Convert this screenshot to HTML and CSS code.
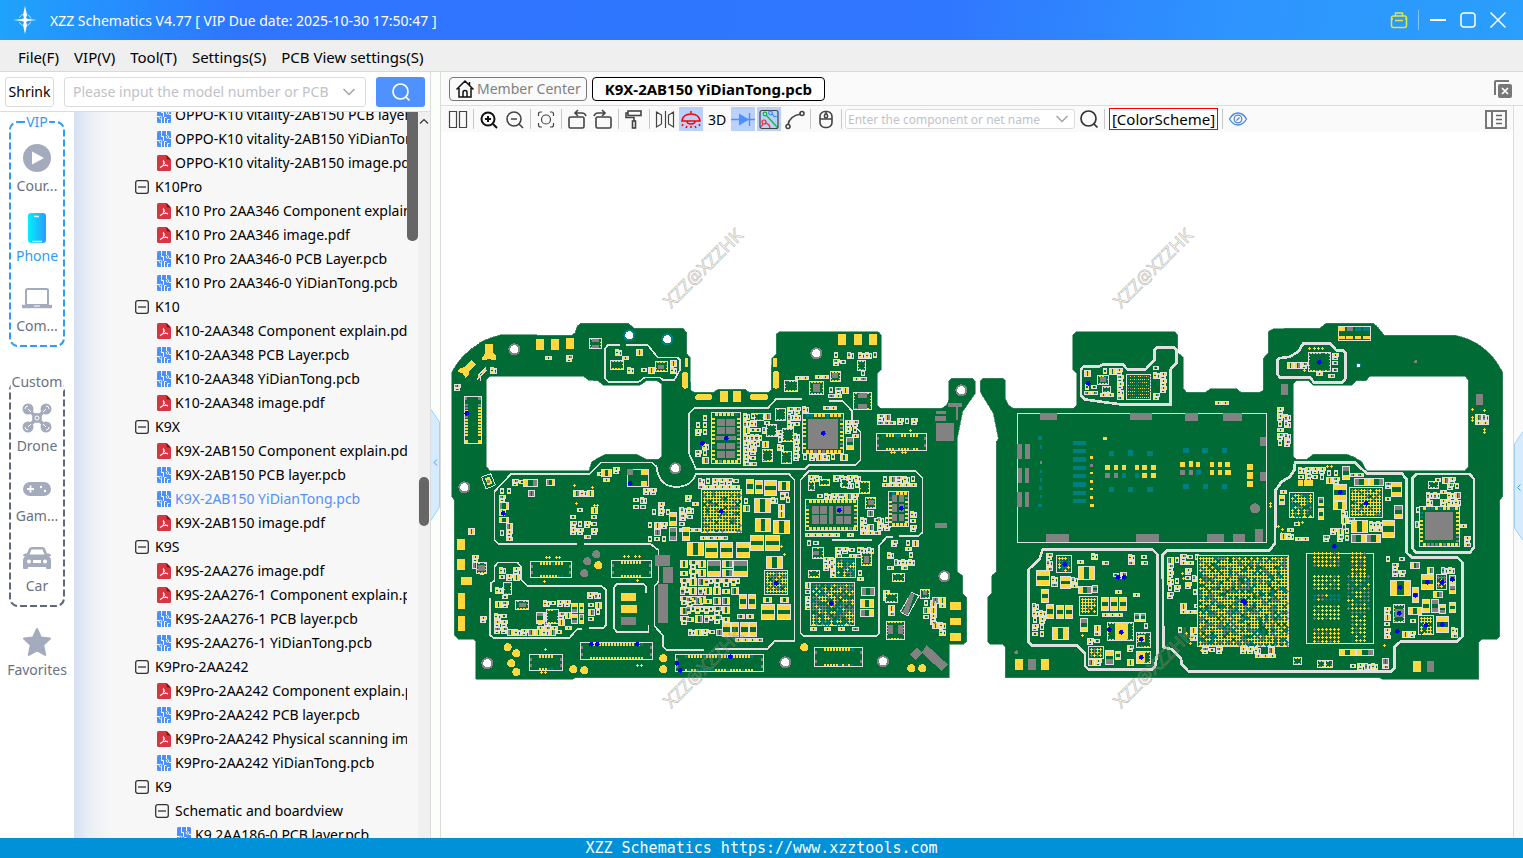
FILE: index.html
```html
<!DOCTYPE html>
<html lang="en">
  <head>
    <meta charset="UTF-8" />
    <title>XZZ Schematics V4.77</title>
    <link rel="stylesheet" href="styles.css">
  </head>
  <body>
    <svg class="sprite" width="0" height="0" aria-hidden="true">
      <symbol id="i-pdf" viewBox="0 0 14 16">
        <path d="M1.500 0H9.500L14 4.500V14.500Q14 16 12.500 16H1.500Q0 16 0 14.500V1.500Q0 0 1.500 0Z" fill="#d6363f" />
        <path d="M9.500 0L14 4.500H10.500Q9.500 4.500 9.500 3.500Z" fill="#8f1118" />
        <path d="M6.300 5.500Q7.500 5.400 7 8Q6.200 10.800 4 12.600Q3 13 3.300 12Q4.500 10.500 10.500 10.200Q11.500 11.300 10 11Q7.300 9.500 6.400 6.800Z" fill="none" stroke="#fff" stroke-width="1" />
      </symbol>
      <symbol id="i-pcb" viewBox="0 0 14 16">
        <rect width="14" height="16" rx="1.500" fill="#4c90fb" />
        <path d="M4.500 0V5.500H6.500V10M9.500 0V4M0 9.500H2.500M14 7.500H12M4.500 16V12M7.500 16V10.500H9.500M10.500 16V12.500H12.500" fill="none" stroke="#fff" />
        <circle cx="10.500" cy="6" r="1.300" fill="#4c90fb" stroke="#fff" stroke-width=".8" />
        <circle cx="3.500" cy="10.500" r="1.300" fill="#4c90fb" stroke="#fff" stroke-width=".8" />
      </symbol>
      <symbol id="i-minus" viewBox="0 0 14 14">
        <rect x=".7" y=".7" width="12.600" height="12.600" rx="2" fill="none" stroke="#333" stroke-width="1.300" />
        <path d="M3 7H11" stroke="#333" stroke-width="1.300" />
      </symbol>
      <symbol id="i-search" viewBox="0 0 20 20">
        <circle cx="9.500" cy="9.500" r="7.500" fill="none" stroke="currentColor" stroke-width="1.700" />
        <path d="M14.800 14.800L18.500 18.500" stroke="currentColor" stroke-width="1.700" />
      </symbol>
      <symbol id="i-down" viewBox="0 0 14 10">
        <path d="M1.500 2L7 7.500L12.500 2" fill="none" stroke="#a0a4aa" stroke-width="1.500" />
      </symbol>
    </svg>

    <header class="titlebar">
      <svg class="logo" viewBox="0 0 24 28">
        <circle cx="12" cy="14" r="6" fill="none" stroke="#bfe0ff" stroke-width="1" stroke-dasharray="5 4.400" stroke-dashoffset="-2" />
        <path d="M12 0L14 9L13 12L15 13L24 14L15 15L13 16L14 19L12 28L10 19L11 16L9 15L0 14L9 13L11 12L10 9Z" fill="#fff" />
      </svg>
      <h1>XZZ Schematics V4.77 [ VIP Due date: 2025-10-30 17:50:47 ]</h1>
      <div class="window-buttons">
        <button aria-label="License"><svg width="18" height="18" viewBox="0 0 18 18" fill="none" stroke="#e3e53c" stroke-width="1.500"><path d="M5.500 5V2H12.500V5" /><rect x="1.500" y="5" width="15" height="11.500" rx="2" /><path d="M1.500 8H3M15 8H16.500M5 9.500H13" /></svg></button>
        <span class="bar"></span>
        <button aria-label="Minimize"><svg width="18" height="18" viewBox="0 0 18 18"><path d="M1 9H17" stroke="#fff" stroke-width="2" /></svg></button>
        <button aria-label="Maximize"><svg width="18" height="18" viewBox="0 0 18 18"><rect x="2" y="2" width="14" height="14" rx="3" fill="none" stroke="#fff" stroke-width="1.500" /></svg></button>
        <button aria-label="Close"><svg width="18" height="18" viewBox="0 0 18 18"><path d="M1.500 1.500L16.500 16.500M16.500 1.500L1.500 16.500" stroke="#fff" stroke-width="1.500" /></svg></button>
      </div>
    </header>

    <nav class="menubar">
      <button>File(F)</button>
      <button>VIP(V)</button>
      <button>Tool(T)</button>
      <button>Settings(S)</button>
      <button>PCB View settings(S)</button>
    </nav>

    <div class="workspace">
      <aside class="sidebar">
        <div class="search-row">
          <button class="shrink">Shrink</button>
          <div class="combo">
            <input type="text" aria-label="Model search" placeholder="Please input the model number or PCB" />
            <button aria-label="History"><svg width="14" height="10"><use href="#i-down" /></svg></button>
          </div>
          <button class="search-btn" aria-label="Search"><svg width="20" height="20"><use href="#i-search" /></svg></button>
        </div>

        <div class="browser">
          <nav class="rail">
            <section class="rail-group vip">
              <svg class="frame"><rect x="1" y="1" rx="8" /></svg>
              <h2>VIP</h2>
              <a href="#">
                <svg viewBox="0 0 30 30"><circle cx="15" cy="15" r="14" fill="#a3abbd" /><path d="M10 8.500V21.500L22 15Z" fill="#fff" /></svg>
                Cour...
              </a>
              <a href="#" class="active">
                <svg viewBox="0 0 30 30"><defs><linearGradient id="ph"><stop stop-color="#00f0ff" /><stop offset="1" stop-color="#2b9bff" /></linearGradient></defs><rect x="6" y="0" width="18" height="30" rx="3" fill="url(#ph)" /><path d="M12 3.500H17M10 28.500H20" stroke="#d5f5ff" stroke-width="1.300" /></svg>
                Phone
              </a>
              <a href="#">
                <svg viewBox="0 0 30 30" fill="none" stroke="#a3abbd"><rect x="4" y="6" width="22" height="16" rx="1.500" stroke-width="2" /><path d="M0 23.500H30" stroke-width="3.400" /><path d="M12 23H18" stroke="#fff" stroke-width="1" /></svg>
                Com...
              </a>
            </section>

            <section class="rail-group custom">
              <svg class="frame"><rect x="1" y="1" rx="8" /></svg>
              <h2>Custom</h2>
              <a href="#">
                <svg viewBox="0 0 30 30" fill="#a3abbd"><circle cx="6" cy="6" r="5.500" /><circle cx="24" cy="6" r="5.500" /><circle cx="6" cy="24" r="5.500" /><circle cx="24" cy="24" r="5.500" /><path d="M6 6L24 24M24 6L6 24" stroke="#a3abbd" stroke-width="3.500" /><circle cx="15" cy="15" r="5" /><g fill="none" stroke="#fff"><path d="M3 6A3 3 0 0 1 6 3M27 6A3 3 0 0 0 24 3M3 24A3 3 0 0 0 6 27M27 24A3 3 0 0 1 24 27" /><circle cx="15" cy="15" r="2" /><path d="M6 6L9 9M24 6L21 9M6 24L9 21M24 24L21 21" /></g></svg>
                Drone
              </a>
              <a href="#">
                <svg viewBox="0 0 30 30"><rect x="1" y="9" width="28" height="14" rx="7" fill="#a3abbd" /><path d="M8.500 12.500V19.500M5 16H12" stroke="#fff" stroke-width="1.800" /><circle cx="19" cy="14" r="1.200" fill="#fff" /><circle cx="23" cy="18" r="1.200" fill="#fff" /></svg>
                Gam...
              </a>
              <a href="#">
                <svg viewBox="0 0 30 30"><path d="M1 12L3 10.500H5L7 5.500Q8 4 10 4H20Q22 4 23 5.500L25 10.500H27L29 12V13H27Q29 15 29 17V25Q29 26 28 26H25Q24 26 24 25V24H6V25Q6 26 5 26H2Q1 26 1 25V17Q1 15 3 13H1Z" fill="#a3abbd" /><path d="M7.500 11.500L9.500 6.500H20.500L22.500 11.500Z" fill="#fff" /><circle cx="7" cy="18.500" r="2" fill="#fff" /><circle cx="23" cy="18.500" r="2" fill="#fff" /><rect x="11" y="17" width="8" height="3" fill="#fff" /></svg>
                Car
              </a>
            </section>

            <a href="#" class="favorites">
              <svg viewBox="0 0 30 30"><path d="M15 2L18.900 10.500L28 11.500L21.200 18L23.200 28L15 23.300L6.800 28L8.800 18L2 11.500L11.100 10.500Z" fill="#a3abbd" stroke="#a3abbd" stroke-width="2" stroke-linejoin="round" /></svg>
              Favorites
            </a>
          </nav>

          <ul class="tree">
            <li class="file"><svg><use href="#i-pcb" /></svg>OPPO-K10 vitality-2AB150 PCB layer.pcb</li>
            <li class="file"><svg><use href="#i-pcb" /></svg>OPPO-K10 vitality-2AB150 YiDianTong.pcb</li>
            <li class="file"><svg><use href="#i-pdf" /></svg>OPPO-K10 vitality-2AB150 image.pdf</li>
            <li class="folder"><svg><use href="#i-minus" /></svg>K10Pro</li>
            <li class="file"><svg><use href="#i-pdf" /></svg>K10 Pro 2AA346 Component explain.pdf</li>
            <li class="file"><svg><use href="#i-pdf" /></svg>K10 Pro 2AA346 image.pdf</li>
            <li class="file"><svg><use href="#i-pcb" /></svg>K10 Pro 2AA346-0 PCB Layer.pcb</li>
            <li class="file"><svg><use href="#i-pcb" /></svg>K10 Pro 2AA346-0 YiDianTong.pcb</li>
            <li class="folder"><svg><use href="#i-minus" /></svg>K10</li>
            <li class="file"><svg><use href="#i-pdf" /></svg>K10-2AA348 Component explain.pdf</li>
            <li class="file"><svg><use href="#i-pcb" /></svg>K10-2AA348 PCB Layer.pcb</li>
            <li class="file"><svg><use href="#i-pcb" /></svg>K10-2AA348 YiDianTong.pcb</li>
            <li class="file"><svg><use href="#i-pdf" /></svg>K10-2AA348 image.pdf</li>
            <li class="folder"><svg><use href="#i-minus" /></svg>K9X</li>
            <li class="file"><svg><use href="#i-pdf" /></svg>K9X-2AB150 Component explain.pdf</li>
            <li class="file"><svg><use href="#i-pcb" /></svg>K9X-2AB150 PCB layer.pcb</li>
            <li class="file selected"><svg><use href="#i-pcb" /></svg>K9X-2AB150 YiDianTong.pcb</li>
            <li class="file"><svg><use href="#i-pdf" /></svg>K9X-2AB150 image.pdf</li>
            <li class="folder"><svg><use href="#i-minus" /></svg>K9S</li>
            <li class="file"><svg><use href="#i-pdf" /></svg>K9S-2AA276 image.pdf</li>
            <li class="file"><svg><use href="#i-pdf" /></svg>K9S-2AA276-1 Component explain.pdf</li>
            <li class="file"><svg><use href="#i-pcb" /></svg>K9S-2AA276-1 PCB layer.pcb</li>
            <li class="file"><svg><use href="#i-pcb" /></svg>K9S-2AA276-1 YiDianTong.pcb</li>
            <li class="folder"><svg><use href="#i-minus" /></svg>K9Pro-2AA242</li>
            <li class="file"><svg><use href="#i-pdf" /></svg>K9Pro-2AA242 Component explain.pdf</li>
            <li class="file"><svg><use href="#i-pcb" /></svg>K9Pro-2AA242 PCB layer.pcb</li>
            <li class="file"><svg><use href="#i-pdf" /></svg>K9Pro-2AA242 Physical scanning image.pdf</li>
            <li class="file"><svg><use href="#i-pcb" /></svg>K9Pro-2AA242 YiDianTong.pcb</li>
            <li class="folder"><svg><use href="#i-minus" /></svg>K9</li>
            <li class="folder deep"><svg><use href="#i-minus" /></svg>Schematic and boardview</li>
            <li class="file deep"><svg><use href="#i-pcb" /></svg>K9 2AA186-0 PCB layer.pcb</li>
          </ul>
          <div class="thumb-strip"><div class="thumb"></div></div>
          <div class="scrollbar">
            <svg width="12" height="8" viewBox="0 0 12 8"><path d="M2 6.500L6 2.500L10 6.500" fill="none" stroke="#333" stroke-width="1.200" /></svg>
            <div class="thumb"></div>
          </div>
        </div>
      </aside>

      <div class="gutter">
        <button aria-label="Collapse left panel"><svg width="9" height="112" viewBox="0 0 9 112"><path d="M0 .5L8.500 13V98L0 111.500" fill="#d7ebfe" stroke="#a2d0f8" /><path d="M6 50.500L3 53.500L6 56.500" fill="none" stroke="#3c9df5" /></svg></button>
      </div>

      <main class="viewer">
        <div class="tabs">
          <button class="tab"><svg width="20" height="20" viewBox="0 0 20 20" fill="none" stroke="#111" stroke-width="1.500"><path d="M1.500 10.500L10 2L18.500 10.500M4 9V18H16V9M14.500 6V3M8 18V13.500Q8 11.500 10 11.500T12 13.500V18" /></svg>Member Center</button>
          <button class="tab current">K9X-2AB150 YiDianTong.pcb</button>
          <button class="close-all" aria-label="Close all tabs"><svg width="20" height="20" viewBox="0 0 20 20"><path d="M2 16V3Q2 2 3 2H16" fill="none" stroke="#777" stroke-width="2" /><rect x="5" y="5" width="14" height="14" rx="2" fill="#777" /><path d="M9 9L15 15M15 9L9 15" stroke="#fff" stroke-width="1.700" /></svg></button>
        </div>

        <div class="view-body">
          <div class="view-col">
            <div class="toolbar">
              <button aria-label="Split"><svg viewBox="0 0 24 24"><path d="M3.500 4.500H10.500V20.500H3.500ZM13.500 4.500H20.500V20.500H13.500Z" /></svg></button>
              <i></i>
              <button aria-label="Zoom in"><svg viewBox="0 0 24 24" class="thick"><circle cx="11" cy="12" r="6.500" /><path d="M16 17L20 21M8 12H14M11 9V15" /></svg></button>
              <button aria-label="Zoom out"><svg viewBox="0 0 24 24" class="mid"><circle cx="11" cy="12" r="7" /><path d="M16 17L20 21M8 12H14" /></svg></button>
              <i></i>
              <button aria-label="Fit"><svg viewBox="0 0 24 24"><circle cx="12" cy="12.500" r="4.500" /><path d="M4.500 9V7Q4.500 5 6.500 5H8M16 5H17.500Q19.500 5 19.500 7V9M19.500 16V18Q19.500 20 17.500 20H16M8 20H6.500Q4.500 20 4.500 18V16" /></svg></button>
              <i></i>
              <button aria-label="Rotate left"><svg viewBox="0 0 24 24" class="mid"><rect x="4" y="10" width="15" height="11" rx="1.500" /><path d="M13 3L10 6L13 9M10.500 6H17Q20 6 21 9" /></svg></button>
              <button aria-label="Rotate right"><svg viewBox="0 0 24 24" class="mid"><rect x="5" y="10" width="15" height="11" rx="1.500" /><path d="M11 3L14 6L11 9M13.500 6H7Q4 6 3 9" /></svg></button>
              <i></i>
              <button aria-label="Paint"><svg viewBox="0 0 24 24" class="mid"><rect x="6" y="4" width="13" height="4.500" /><path d="M6 6H4V10.500H12V14" /><rect x="10.500" y="14" width="3" height="7" /></svg></button>
              <i></i>
              <button aria-label="Mirror"><svg viewBox="0 0 24 24"><path d="M3.500 5V20L8.500 17V8ZM12.500 4V21M20.500 5V20L15.500 17V8Z" /></svg></button>
              <button class="on" aria-label="Light"><svg viewBox="0 0 24 24"><path d="M3 14Q4 7 12 7T21 14ZM12 4V7M8 14Q8 17 12 17T16 14M4 17L3 19M8 19L7 21M12 19V21M16 19L17 21M20 17L21 19" stroke="#f00" stroke-width="1.500" /></svg></button>
              <button class="txt">3D</button>
              <button class="on" aria-label="Diode"><svg viewBox="0 0 24 24"><path d="M0 12.500H24M18.500 6V19" stroke="#4c90fb" stroke-width="1.300" /><path d="M8 6.500V18.500L18 12.500Z" fill="#4c90fb" stroke="none" /></svg></button>
              <button class="on" aria-label="Nets"><svg viewBox="0 0 24 24"><rect x="3" y="3.500" width="18" height="18" rx="2" /><g stroke-width="1.200"><path d="M9.500 8.500L20 20" stroke="#12b52c" /><path d="M15 6.500L17 9.500H20" stroke="#3d8cf7" /><path d="M4 20L6 17M9 16L12 18L13 21" stroke="#f22" /><circle cx="8" cy="7" r="1.800" stroke="#12b52c" /><circle cx="13.500" cy="6" r="1.800" stroke="#3d8cf7" /><circle cx="7" cy="15" r="2" stroke="#f22" /></g></svg></button>
              <button aria-label="Curve"><svg viewBox="0 0 24 24" class="mid"><path d="M5 18Q6 9 18 7" /><circle cx="5" cy="19.500" r="2" /><circle cx="19" cy="6.500" r="2" /></svg></button>
              <i></i>
              <button aria-label="Mouse"><svg viewBox="0 0 24 24" class="mid"><rect x="6" y="4.500" width="12" height="16" rx="5" /><path d="M6 12H18M12 4.500V7" /><rect x="10.500" y="7" width="3" height="4" rx="1.500" /></svg></button>
              <i></i>
              <div class="combo small">
                <input type="text" aria-label="Component search" placeholder="Enter the component or net name" />
                <button aria-label="History"><svg width="14" height="10"><use href="#i-down" /></svg></button>
              </div>
              <button aria-label="Find"><svg viewBox="0 0 20 20" class="find"><use href="#i-search" /></svg></button>
              <i></i>
              <button class="scheme">[ColorScheme]</button>
              <i></i>
              <button aria-label="Visibility"><svg viewBox="0 0 24 24"><path d="M3.500 12Q7 6 12 6T20.500 12Q17 18 12 18T3.500 12Z" stroke="#4a86dc" stroke-width="1.300" /><circle cx="12" cy="12" r="3.800" stroke="#4a86dc" stroke-width="1.300" /><path d="M10.500 13.500L13.500 10.500" stroke="#4a86dc" /></svg></button>
              <button class="panel-btn" aria-label="Details panel"><svg viewBox="0 0 24 24"><path d="M2 4H22V21H2ZM8 4V21" stroke="#777" stroke-width="2" /><path d="M12 8.500H18M12 12.500H18M12 16.500H18" stroke="#666" stroke-width="1.300" /></svg></button>
            </div>
            <div class="canvas">
              <svg id="board" viewBox="3 -534 3216 2118"></svg>
            </div>
          </div>
          <div class="right-strip">
            <button aria-label="Expand right panel"><svg width="9" height="110" viewBox="0 0 9 110"><path d="M9 .5L.5 13V97L9 109.500" fill="#d7ebfe" stroke="#a2d0f8" /><path d="M6.500 53.500L3.500 56.500L6.500 59.500" fill="none" stroke="#3c9df5" /></svg></button>
          </div>
        </div>
      </main>
    </div>

    <footer>XZZ Schematics https://www.xzztools.com</footer>
    <script src="board.js"></script>
  </body>
</html>
```

FILE: styles.css
```css
* {
  box-sizing: border-box;
  margin: 0;
  padding: 0;
}

body {
  height: 100vh;
  display: flex;
  flex-direction: column;
  overflow: hidden;
  font-family: "Noto Sans", "Open Sans", sans-serif;
  font-size: 14px;
  color: #000;
  background-color: #fff;
}

button,
input {
  font: inherit;
  color: inherit;
  background: none;
  border: none;
}

a {
  color: inherit;
  text-decoration: none;
}

svg {
  display: block;
}

.sprite {
  position: absolute;
}

/* title bar */
.titlebar {
  height: 40px;
  flex: none;
  display: flex;
  align-items: center;
  padding: 0 16px 0 13px;
  color: #fff;
  background: linear-gradient(100deg, #1ea4fb 0%, #2f75ff 16%, #3077ff 62%, #2e93fe 80%, #2a9ffc 100%);
}

.logo {
  width: 24px;
  height: 28px;
  margin-right: 13px;
}

.titlebar h1 {
  font-size: 14px;
  font-weight: normal;
}

.window-buttons {
  margin-left: auto;
  display: flex;
  align-items: center;
  gap: 12px;
}

.window-buttons .bar {
  width: 1px;
  height: 20px;
  margin: 0 -2px;
  background-color: #7fc3ff;
}

/* menu */
.menubar {
  height: 32px;
  flex: none;
  display: flex;
  align-items: center;
  gap: 15px;
  padding: 2px 0 0 18px;
  font-size: 15px;
  background-color: #efefef;
  border-bottom: 1px solid #dadada;
}

.workspace {
  flex: 1;
  min-height: 0;
  display: flex;
}

/* left panel */
.sidebar {
  width: 431px;
  flex: none;
  display: flex;
  flex-direction: column;
  border-right: 1px solid #dcdcdc;
}

.search-row {
  height: 40px;
  flex: none;
  display: flex;
  align-items: center;
  gap: 10px;
  padding: 0 5px;
  border-bottom: 1px solid #dcdcdc;
}

.shrink {
  width: 49px;
  height: 30px;
  border: 1px solid #dcdcdc;
  border-radius: 3px;
}

.combo {
  flex: 1;
  min-width: 0;
  height: 30px;
  display: flex;
  align-items: center;
  padding: 0 9px 0 8px;
  border: 1px solid #dcdcdc;
  border-radius: 3px;
  background-color: #fff;
}

.combo input {
  flex: 1;
  min-width: 0;
  outline: none;
}

.combo input::placeholder {
  color: #bfc2c8;
}

.search-btn {
  width: 49px;
  height: 30px;
  display: grid;
  place-items: center;
  color: #fff;
  border-radius: 3px;
  background-color: #4f92ff;
}

.browser {
  flex: 1;
  min-height: 0;
  display: flex;
}

.rail {
  width: 74px;
  flex: none;
  padding: 9px 9px 0;
  color: #697182;
}

.rail-group {
  position: relative;
  height: 226px;
  padding-top: 16px;
  margin-bottom: 34px;
}

.rail-group .frame {
  position: absolute;
  inset: 0;
  width: 100%;
  height: 100%;
}

.frame rect {
  width: calc(100% - 2px);
  height: calc(100% - 2px);
  fill: none;
  stroke: #5f6779;
  stroke-width: 2px;
  stroke-dasharray: 7 3;
}

.vip .frame rect {
  stroke: #2f9cf8;
}

.rail-group h2 {
  position: absolute;
  top: -8px;
  left: 50%;
  transform: translateX(-50%);
  padding: 0 1px;
  font-size: 14px;
  line-height: 18px;
  font-weight: normal;
  background-color: #fff;
}

.vip h2,
.rail .active {
  color: #2f9cf8;
}

.rail a {
  position: relative;
  height: 70px;
  display: flex;
  flex-direction: column;
  align-items: center;
  gap: 3px;
  padding-top: 6px;
  line-height: 20px;
}

.rail a svg {
  width: 30px;
  height: 30px;
  flex: none;
}

.rail .favorites {
  margin-top: -20px;
}

.tree {
  flex: 1;
  min-width: 0;
  overflow: hidden;
  list-style: none;
  white-space: nowrap;
  background: linear-gradient(90deg, #d5e0f2 0, #e9edf5 14px, #f7f7f7 36px);
}

.tree li {
  height: 24px;
  display: flex;
  align-items: center;
  line-height: 24px;
}

.tree li:first-child {
  margin-top: -9px;
}

.tree svg {
  flex: none;
}

.tree .folder {
  padding-left: 61px;
}

.tree .folder svg {
  width: 14px;
  height: 14px;
  margin-right: 6px;
}

.tree .file {
  padding-left: 83px;
}

.tree .file svg {
  width: 14px;
  height: 16px;
  margin-right: 4px;
}

.tree .folder.deep {
  padding-left: 81px;
}

.tree .file.deep {
  padding-left: 103px;
}

.tree .selected {
  color: #5590f7;
}

.thumb-strip {
  width: 11px;
  flex: none;
  background-color: #f7f7f7;
}

.thumb-strip .thumb {
  height: 129px;
  background-color: #666;
  border-radius: 0 0 5px 5px;
}

.scrollbar {
  width: 12px;
  flex: none;
  padding-top: 5px;
  background-color: #f0f0f0;
}

.scrollbar .thumb {
  width: 10px;
  height: 49px;
  margin: 352px 1px 0;
  background-color: #666;
  border-radius: 5px;
}

.gutter {
  width: 10px;
  flex: none;
  display: flex;
  align-items: center;
  padding-top: 19px;
  background-color: #fbfffa;
  border-right: 1px solid #dcdcdc;
}

/* viewer */
.viewer {
  flex: 1;
  min-width: 0;
  display: flex;
  flex-direction: column;
}

.tabs {
  height: 34px;
  flex: none;
  display: flex;
  align-items: center;
  gap: 5px;
  padding: 0 10px 0 8px;
  background-color: #fafafa;
  border-bottom: 1px solid #dcdcdc;
}

.tab {
  height: 24px;
  display: flex;
  align-items: center;
  gap: 2px;
  padding: 0 5px;
  color: #808080;
  border: 1px solid #777;
  border-radius: 4px;
}

.tab.current {
  padding: 0 12px;
  font-size: 15px;
  font-weight: bold;
  color: #000;
  background-color: #fff;
  border-color: #000;
}

.close-all {
  margin-left: auto;
}

.view-body {
  flex: 1;
  min-height: 0;
  display: flex;
}

.view-col {
  flex: 1;
  min-width: 0;
  display: flex;
  flex-direction: column;
}

.toolbar {
  height: 26px;
  flex: none;
  display: flex;
  align-items: center;
  gap: 2px;
  padding: 0 5px;
  background-color: #fafafa;
}

.toolbar > i {
  width: 1px;
  height: 20px;
  margin: 0 1px;
  background-color: #c8c8c8;
}

.toolbar > button {
  width: 24px;
  height: 24px;
  flex: none;
}

.toolbar > button > svg {
  width: 24px;
  height: 24px;
  fill: none;
  stroke: #444;
  stroke-width: 1.2px;
}

.toolbar > button > svg.mid {
  stroke-width: 1.6px;
}

.toolbar > button > svg.thick {
  stroke: #111;
  stroke-width: 2px;
}

.toolbar > button > svg.find {
  width: 20px;
  height: 20px;
  margin: 2px;
  color: #333;
}

.toolbar > .on {
  background-color: #b9d1fc;
}

.toolbar > .scheme {
  width: 109px;
  height: 22px;
  margin: 0 1px;
  font-size: 15px;
  line-height: 20px;
  border: 1px solid #f00;
  background-color: #fff;
}

.toolbar > .panel-btn {
  margin-left: auto;
}

.combo.small {
  flex: none;
  width: 230px;
  height: 20px;
  padding: 0 4px 0 2px;
  font-size: 12px;
}

.combo.small button {
  padding: 0 1px 0 4px;
}

.canvas {
  flex: 1;
  min-height: 0;
}

.canvas svg {
  width: 100%;
  height: 100%;
  shape-rendering: crispEdges;
}

.watermark {
  font-size: 54px;
  fill: none;
  stroke: #9a9284;
  stroke-width: 2px;
  opacity: 0.6;
  text-anchor: middle;
}

.right-strip {
  width: 10px;
  flex: none;
  display: flex;
  align-items: center;
  padding-top: 28px;
  background-color: #fafafa;
  border-left: 1px solid #dcdcdc;
}

footer {
  height: 20px;
  flex: none;
  line-height: 20px;
  text-align: center;
  font-family: "DejaVu Sans Mono", monospace;
  font-size: 15px;
  color: #fff;
  background-color: #0091d9;
}
```

FILE: board.js
```js
const COLORS = {
  w: "#e0e0e0",
  n: "#006b35",
  y: "#ffd83f",
  g: "#828282",
  t: "#007f80",
  b: "#0000f5",
};

let seed = 7;
function rnd() {
  seed = (seed * 1103515245 + 12345) % 2147483648;
  return seed / 2147483648;
}
const pick = (s) => s[Math.floor(rnd() * s.length)];

// rectangles of one colour are collected into a single path
class Layer {
  constructor() {
    this.paths = { w: "", n: "", y: "", g: "", t: "" };
  }
  rect(c, x, y, w, h) {
    this.paths[c] += `M${x} ${y}h${w}v${h}h${-w}z`;
  }
  frame(x, y, w, h) {
    this.rect("w", x, y, w, h);
    this.rect("n", x + 3, y + 3, w - 6, h - 6);
  }
  // two pad component
  part(x, y, w, h, pads) {
    this.frame(x, y, w, h);
    const a = pads ? pads[0] : pick("yyyyg");
    const b = pads ? pads[1] : pick("yyyg");
    const horizontal = w >= h;
    const len = Math.max(3, Math.round(((horizontal ? w : h) - 6) / 9) * 3);
    if (horizontal) {
      this.rect(a, x + 3, y + 3, len, h - 6);
      this.rect(b, x + w - 3 - len, y + 3, len, h - 6);
    } else {
      this.rect(a, x + 3, y + 3, w - 6, len);
      this.rect(b, x + 3, y + h - 3 - len, w - 6, len);
    }
  }
  cluster(x, y, w, h, d = 0.86) {
    x = Math.round(x / 3) * 3;
    y = Math.round(y / 3) * 3;
    for (let j = y; j < y + h - 6; j += 21) {
      for (let i = x; i < x + w - 6; i += 21) {
        if (rnd() > d) continue;
        const r = rnd();
        const low = y + h - j < 18;
        if (low || r < 0.3) {
          this.part(i, j, 21, 12);
          if (!low) this.part(i, j + 12, 18, 9);
        } else if (r < 0.55) {
          this.part(i, j, 12, 21);
          this.part(i + 12, j + 3, 9, 18);
        } else if (r < 0.7) {
          this.part(i, j, 21, 21);
        } else if (r < 0.85) {
          this.part(i + 3, j, 12, 18);
        } else {
          this.part(i, j + 3, 18, 12);
        }
      }
    }
  }
  // looser cluster with medium size parts
  wide(x, y, w, h) {
    for (let j = y; j < y + h - 15; j += 27) {
      for (let i = x; i < x + w - 15; i += 27) {
        const r = rnd();
        if (r < 0.35) {
          this.part(i, j, 24, 24);
        } else if (r < 0.6) {
          this.part(i, j, 15, 24);
          this.part(i + 15, j, 12, 18);
        } else if (r < 0.85) {
          this.part(i, j, 27, 15);
          this.part(i + 3, j + 15, 18, 12);
        } else {
          this.part(i, j + 6, 24, 15);
        }
      }
    }
  }
  bga(x, y, w, h, colors) {
    this.frame(x, y, w, h);
    for (let j = y + 9; j < y + h - 4; j += 9) {
      for (let i = x + 9; i < x + w - 4; i += 9) {
        if (rnd() > 0.93) continue;
        const c = pick(colors);
        this.rect(c, i - 4, j - 1, 9, 3);
        this.rect(c, i - 1, j - 4, 3, 9);
      }
    }
  }
  grid(x, y, cols, rows, colors) {
    for (let j = 0; j < rows; j++) {
      for (let i = 0; i < cols; i++) {
        const c = pick(colors);
        this.rect(c, x + i * 12, y + j * 12 + 3, 9, 3);
        this.rect(c, x + i * 12 + 3, y + j * 12, 3, 9);
      }
    }
  }
  // chip with pads round the edge and an optional body
  chip(x, y, w, h, body) {
    this.frame(x, y, w, h);
    const s = w > 80 || h > 80 ? 12 : 6;
    for (let i = x + s; i < x + w - s; i += s > 6 ? 12 : 9) {
      this.rect(pick("yyyyt"), i, y + 3, s / 2 + 3, s - 3);
      this.rect(pick("yyyyg"), i, y + h - s, s / 2 + 3, s - 3);
    }
    for (let j = y + s + 6; j < y + h - s - 3; j += s > 6 ? 12 : 9) {
      this.rect(pick("yyyt"), x + 3, j, s - 3, s / 2);
      this.rect(pick("yyyg"), x + w - s, j, s - 3, s / 2);
    }
    (body || []).forEach((b) => this.rect("g", ...b));
  }
  conn(x, y, w, h) {
    this.frame(x, y, w, h);
    if (h > w) {
      for (let j = y + 24; j < y + h - 24; j += 9) {
        this.rect(pick("yyyg"), x + 3, j, 9, 5);
        this.rect(pick("yyyg"), x + w - 12, j, 9, 5);
      }
      this.rect("g", x + 3, y + 3, 6, 9);
      this.rect("g", x + w - 12, y + 3, 9, 9);
      this.rect("y", x + 3, y + h - 12, 9, 9);
      this.rect("y", x + w - 12, y + h - 12, 9, 9);
      return;
    }
    for (let i = x + 30; i < x + w - 30; i += 9) {
      this.rect(pick("yyyyyt"), i, y + 3, 5, 7);
      this.rect(pick("yyyyt"), i, y + h - 10, 5, 7);
    }
    [x + 3, x + w - 9].forEach((i) => {
      this.rect("g", i, y + 12, 6, 9);
      this.rect("g", i, y + h - 21, 6, 9);
    });
  }
  svg() {
    return ["w", "n", "y", "g", "t"]
      .map((c) => `<path d="${this.paths[c]}" fill="${COLORS[c]}"/>`)
      .join("");
  }
}

const outlines = [
  "M35 187Q85 95 185 74L395 76 405 68 412 48 422 40H565L583 55H730L740 68V130L750 142 752 240 762 247H820L835 237H915L927 247H985L993 240 995 145 1009 132V72L1018 65H1315L1323 75V180L1312 190V285L1322 295H1505L1520 285 1526 270V212L1535 205H1598L1606 215V250L1568 305 1552 385V785L1568 797V850L1580 862V995L1570 1003H1528V1103H405L398 1108H107V995L100 988H55L43 975V570L35 560Z" +
    "M150 199H430L445 210 475 213 490 226H600L620 212H650L665 222V438L655 448H620L590 433H495L455 455 447 482H150L139 470V210Z",
  "M1620 215L1628 205H1690L1696 212V265L1705 285 1720 295H1900L1910 285V190L1898 178V75L1908 65H2205L2213 75V128L2230 142V235L2240 247H2295L2312 236H2390L2403 247H2460L2470 240V145L2485 128V65L2500 56 2640 54 2658 40H2800L2812 50 2832 75H3040Q3140 92 3188 187V560L3179 570V980L3170 988H3125L3116 998V1108H2825L2820 1103H1695V1010L1688 1003H1650L1643 995V862L1655 850V797L1669 785V395L1675 385 1660 310 1620 245Z" +
    "M2570 212H2605L2620 226H2735L2750 212H2778L2790 199H3075L3085 210V470L3075 482H2780L2765 455 2740 440 2720 433H2620L2600 448H2570L2560 440V222Z",
];

const sections = [
  {
    at: 0,
    stroke: 5,
    traces: [
      "M541 104H505L495 115V205L505 215H597L615 202H660L668 209H703L720 180V150L712 142H653L622 104H558",
      "M410 702H175L163 690V545L213 492H448L483 457H635L650 470Q655 531 712 531Q755 528 768 492H1047L1063 510V992H1005L982 1017H825",
      "M792 1020H680L668 1008V975L643 948V830L655 815V720L632 702H432",
      "M152 845V820L163 812V770L175 757H232L243 770V808L263 828H485L498 840V945L490 954H448M425 957H412L388 984H160L150 975V865",
      "M618 850V830L610 822H530L522 832V955L530 966H625V945",
    ],
    clusters: [[378, 136, 54, 22], [315, 139, 20, 12], [420, 99, 20, 12], [525, 118, 90, 32, 0.7], [560, 150, 80, 46, 0.7], [690, 150, 15, 40], [150, 170, 18, 20], [43, 222, 20, 20], [470, 485, 22, 15], [520, 472, 15, 20], [490, 505, 22, 14], [216, 508, 30, 22], [178, 535, 40, 155, 0.5], [264, 540, 12, 20], [400, 540, 50, 22], [390, 590, 80, 100, 0.65], [610, 535, 30, 25], [580, 560, 40, 40], [633, 575, 50, 45], [620, 635, 66, 60], [717, 590, 24, 70], [96, 735, 40, 60, 0.6], [178, 770, 55, 40], [165, 830, 30, 60, 0.7], [163, 910, 42, 60], [200, 957, 170, 18, 1], [290, 905, 100, 50, 0.8], [310, 870, 90, 25], [420, 845, 60, 22, 0.7], [445, 875, 40, 66], [85, 655, 27, 18], [120, 918, 22, 20]],
    gold: [[288, 87, 24, 33], [333, 87, 24, 33], [378, 84, 24, 33], [136, 101, 24, 40], [735, 144, 9, 27], [51, 688, 24, 31], [51, 747, 24, 32], [63, 801, 33, 24], [54, 849, 21, 48], [54, 918, 21, 44], [543, 849, 45, 24], [543, 885, 48, 24]],
    round: [[727, 186, 17, 50], [766, 253, 50, 17]],
    gray: [[543, 921, 45, 24], [646, 735, 44, 33], [669, 771, 30, 48], [654, 822, 30, 116]],
    conns: [[73, 259, 54, 144], [271, 754, 126, 51], [514, 751, 123, 54], [421, 997, 219, 54], [268, 1033, 102, 51], [706, 1033, 267, 54]],
    chips: [[510, 150, 42, 30], [645, 153, 38, 33, [[654, 165, 18, 12]]], [109, 757, 33, 36, [[115, 766, 20, 18]]], [190, 817, 27, 39], [226, 871, 42, 30, [[237, 879, 21, 12]]], [318, 897, 38, 45], [447, 85, 38, 33, [[456, 88, 20, 9], [456, 105, 20, 10]]]],
    parts: [[688, 606, 24, 42], [688, 651, 24, 42, "gg"], [726, 651, 22, 42], [741, 697, 48, 40, "yy"], [795, 697, 40, 48, "yy"], [482, 478, 33, 24], [250, 508, 45, 22, "yg"], [318, 508, 26, 20, "gy"], [178, 577, 28, 24], [178, 622, 28, 18], [393, 880, 21, 30], [417, 880, 15, 30], [393, 912, 21, 30], [417, 912, 15, 30], [288, 905, 24, 36]],
    pins: [[80, 310], [190, 610], [571, 520], [788, 400], [454, 1003], [472, 1003], [592, 1003], [710, 1060], [721, 1081]],
    goldDots: [[203, 1012], [229, 1030], [214, 1060], [229, 1086], [400, 1078], [433, 1081], [670, 1045], [670, 1078], [475, 766]],
    grayDots: [[469, 733], [442, 754], [433, 790]],
    holes: [[223, 118], [568, 76, "t"], [682, 88, "t"], [706, 475], [73, 532], [142, 1060]],
    marks: [[399, 522], [453, 528], [405, 576], [459, 583], [468, 583], [315, 738], [324, 738], [345, 738], [354, 738], [549, 735], [561, 735], [582, 735], [594, 735], [309, 810], [588, 807], [312, 1014], [588, 1062], [600, 1062], [300, 1083], [312, 1083]],
    extra: `<path d="M94 151L107 164 87 184 86 196 76 203 68 190 52 184 60 174 74 172Z" fill="${COLORS.y}"/>
      <path d="M136 130H160L168 138V150H154L147 145 140 150H126V142Z" fill="${COLORS.y}"/>
      <path d="M125 501L152 491 166 525 138 537Z" fill="none" stroke="${COLORS.w}" stroke-width="3"/>
      <path d="M134 505L148 499 158 520 144 527Z" fill="${COLORS.y}"/>
      <path d="M141 509h10v10h-10z" fill="${COLORS.g}"/>
      <path d="M562 478H625V528H562Z" fill="${COLORS.n}" stroke="${COLORS.w}" stroke-width="3"/>
      <path d="M603 477h20v18h-20zM603 513h18v14h-18z" fill="${COLORS.y}"/>
      <path d="M562 477h18v18h-18z" fill="${COLORS.g}"/>
      <path d="M113 210L117 193 138 172M120 213L124 195 142 180" fill="none" stroke="${COLORS.w}" stroke-width="3"/>
      <path d="M117 204L119 194M127 188L136 178" stroke="${COLORS.y}" stroke-width="7"/>`,
  },
  {
    at: 720,
    stroke: 5,
    traces: [
      "M365 267H288L265 293H45L27 310V430L48 477H375L388 464H528L541 450V365L516 342V303L488 273H448",
      "M640 681H620L597 707V970L590 978H370L361 968V510L387 483H707L727 503V668L715 678H658M455 690H575",
    ],
    clusters: [[45, 315, 45, 150, 0.75], [189, 310, 40, 155, 0.9], [230, 310, 60, 40, 0.7], [225, 350, 45, 105, 0.6], [290, 360, 25, 60, 0.7], [320, 290, 40, 65, 0.7], [340, 370, 20, 90], [365, 288, 22, 20], [430, 287, 45, 14], [365, 432, 110, 22], [495, 330, 28, 50, 0.7], [460, 127, 60, 40, 0.8], [535, 127, 55, 22, 0.8], [520, 180, 42, 30, 0.7], [325, 197, 55, 14], [405, 195, 40, 14], [445, 230, 60, 35, 0.7], [55, 505, 130, 30, 0.8], [15, 555, 40, 36, 0.7], [0, 591, 60, 75, 0.7], [190, 565, 25, 100, 0.5], [273, 560, 57, 60, 0.7], [60, 677, 90, 14], [165, 983, 80, 14], [385, 495, 65, 18, 0.7], [460, 495, 70, 40, 0.8], [410, 550, 120, 18, 1], [540, 600, 50, 80, 0.7], [605, 498, 95, 36, 0.8], [690, 540, 25, 125, 0.8], [590, 620, 30, 40], [375, 668, 140, 14], [378, 690, 30, 20], [430, 740, 34, 65], [375, 815, 15, 120, 0.6], [465, 712, 75, 30], [540, 710, 38, 20], [530, 780, 20, 30], [390, 950, 190, 14, 0.5], [612, 690, 100, 36, 0.7], [620, 726, 75, 55, 0.65], [608, 820, 15, 50, 0.8], [625, 885, 25, 38, 0.8], [730, 870, 30, 75, 0.9], [735, 935, 60, 45, 0.7], [755, 862, 40, 36, 0.6], [722, 812, 20, 20], [590, 312, 35, 30, 0.8], [627, 332, 20, 12], [650, 325, 50, 18, 1], [25, 958, 100, 22, 1]],
    wides: [[0, 750, 75, 130], [72, 805, 108, 54], [18, 860, 140, 78], [0, 890, 30, 60], [170, 905, 50, 30], [300, 545, 30, 20]],
    gold: [[474, 72, 24, 32], [522, 72, 24, 32], [567, 72, 24, 32], [279, 144, 12, 27], [120, 243, 24, 33], [159, 243, 24, 33], [809, 876, 34, 24], [809, 924, 34, 21], [809, 969, 34, 24], [15, 144, 9, 27]],
    round: [[279, 184, 18, 52], [210, 253, 54, 17], [46, 253, 50, 17], [7, 186, 17, 50]],
    gray: [[768, 339, 54, 54], [804, 279, 42, 12], [828, 291, 6, 40], [768, 303, 30, 9], [765, 318, 33, 14], [765, 639, 36, 15]],
    conns: [[589, 370, 153, 54], [403, 1012, 145, 60]],
    chips: [
      [367, 308, 125, 123, [[384, 327, 90, 90]]],
      [92, 307, 92, 156, [[110, 327, 26, 21], [138, 327, 27, 21], [110, 350, 26, 21], [138, 350, 27, 21], [107, 378, 60, 12], [110, 399, 26, 18], [138, 399, 27, 18], [110, 423, 26, 21], [138, 423, 27, 21]]],
      [375, 567, 158, 96, [[395, 588, 21, 24], [419, 588, 22, 24], [395, 615, 21, 26], [419, 615, 22, 26], [446, 588, 14, 54], [468, 588, 22, 24], [492, 588, 21, 24], [468, 617, 22, 24], [492, 617, 21, 24]]],
      [624, 542, 63, 108, [[637, 555, 14, 21], [656, 555, 15, 21], [637, 582, 14, 24], [656, 582, 15, 24], [637, 612, 14, 21], [656, 612, 15, 21]]],
      [387, 212, 45, 42, [[399, 221, 21, 24]]],
      [313, 210, 40, 36], [450, 182, 34, 34, [[456, 190, 18, 15]]], [532, 150, 27, 34],
      [520, 247, 57, 54, [[535, 250, 27, 15], [535, 282, 27, 15]]],
      [619, 932, 57, 57, [[624, 945, 15, 27], [655, 945, 15, 27]]],
      [637, 790, 39, 27], [616, 850, 39, 30], [720, 836, 31, 30, [[728, 842, 14, 14]]],
      [383, 513, 22, 30], [417, 508, 34, 20], [482, 507, 26, 28],
      [538, 513, 33, 39], [555, 560, 34, 38, [[564, 570, 18, 15]]], [397, 712, 34, 36, [[400, 724, 18, 12]]], [385, 780, 36, 24], [543, 727, 33, 42, [[552, 738, 15, 20]]], [285, 295, 33, 39], [258, 342, 34, 40], [306, 355, 36, 42], [247, 417, 33, 40], [303, 424, 34, 38], [222, 310, 30, 22],
    ],
    bgas: [[63, 537, 123, 132, "yyyyg"], [252, 780, 72, 74, "yyyg"], [465, 742, 62, 62, "yyttg"], [390, 816, 135, 132, "yyyttggg"]],
    parts: [[198, 507, 25, 45, "yy"], [225, 510, 25, 42, "yy"], [252, 510, 40, 48, "yy"], [222, 565, 51, 43, "yy"], [225, 624, 49, 41, "yy"], [280, 630, 51, 41, "yy"], [210, 675, 42, 48, "yy"], [256, 675, 43, 48, "yy"], [21, 697, 50, 40, "yy"], [75, 697, 40, 48, "yy"], [120, 697, 40, 48, "yy"], [167, 697, 42, 48, "yy"], [259, 737, 51, 40, "yy"], [244, 882, 41, 48, "yy"], [290, 882, 42, 48, "yy"], [295, 514, 36, 30], [80, 750, 43, 50, "gy"], [125, 750, 33, 24, "yg"], [125, 776, 33, 24, "yg"], [160, 750, 43, 50, "gy"], [178, 853, 24, 45], [203, 853, 24, 45], [127, 937, 25, 45], [153, 937, 25, 45], [181, 937, 25, 45], [207, 937, 25, 45], [543, 832, 43, 25], [540, 867, 42, 26], [540, 897, 42, 24], [5, 651, 24, 42], [498, 381, 25, 39], [480, 432, 25, 20, "yy"], [250, 862, 26, 16], [300, 862, 28, 16]],
    pins: [[67, 400], [139, 385], [430, 370], [124, 604], [289, 820], [478, 601], [664, 595], [454, 880], [151, 1040]],
    goldDots: [[373, 1012], [694, 1075], [727, 1075]],
    grayDots: [],
    holes: [[409, 130], [844, 241], [793, 799], [316, 1057], [609, 1054]],
    marks: [[300, 705], [309, 729], [687, 357], [630, 423], [639, 423], [663, 423], [672, 423]],
    extra: `<path d="M740 1005L803 1063 785 1083 727 1030 707 1050 691 1033 710 1013 725 1027Z" fill="${COLORS.g}"/>
      <path d="M695 847L717 857 683 918 661 905Z" fill="${COLORS.n}" stroke="${COLORS.w}" stroke-width="3"/>
      <path d="M691 848L703 854 682 915 668 907Z" fill="${COLORS.g}"/>`,
  },
  {
    at: 1590,
    stroke: 8,
    traces: [
      "M333 178V255L343 268 450 283H602V178L620 158V120L612 112H560L553 120V150L527 178H472L458 163H398L388 170H340Z",
      "M218 718H547L562 733V1030L555 1070 547 1078H355L345 1068V1030L322 1007H185L176 997V778L208 748Z",
      "M578 735L590 722H898L915 700 917 540 935 515 960 500 973 480 975 458H1155L1190 490H1295L1310 508V728L1325 742H1462L1477 757V980L1462 994H1292L1273 1012V1075L1265 1084H655L635 1062 633 1045 605 1018 580 1012Z",
    ],
    box: [142, 310, 748, 387],
    clusters: [[342, 180, 40, 80, 0.7], [395, 175, 65, 20, 0.8], [440, 195, 20, 70, 1], [390, 250, 45, 14, 1], [548, 165, 35, 105, 0.65], [228, 730, 25, 50], [322, 730, 50, 35, 0.8], [395, 733, 40, 36, 0.6], [475, 733, 20, 28, 1], [513, 733, 20, 28, 1], [243, 797, 26, 38], [302, 800, 18, 30, 1], [186, 880, 28, 110, 0.9], [350, 985, 45, 22], [355, 1046, 45, 20, 1], [395, 908, 60, 12], [470, 1005, 20, 60], [590, 740, 30, 130, 0.6], [630, 733, 50, 30], [645, 775, 36, 90, 0.7], [630, 880, 50, 30, 0.8], [660, 950, 20, 40], [695, 1012, 175, 18, 0.7], [430, 787, 42, 27, 1], [490, 850, 18, 14, 1], [735, 273, 42, 12, 1], [372, 945, 25, 30], [520, 940, 16, 25], [435, 840, 20, 12, 1], [620, 930, 20, 40]],
    gold: [[399, 381, 12, 9], [360, 438, 9, 9], [360, 486, 9, 6], [360, 510, 9, 9], [360, 534, 9, 6], [360, 558, 9, 9], [360, 582, 12, 9], [405, 465, 15, 15], [432, 465, 12, 15], [456, 465, 12, 15], [495, 465, 12, 15], [516, 465, 15, 15], [543, 465, 15, 15], [516, 489, 15, 15], [543, 489, 15, 15], [630, 456, 15, 15], [657, 453, 12, 18], [678, 456, 12, 15], [720, 456, 12, 15], [744, 456, 12, 15], [765, 456, 15, 15], [720, 480, 12, 15], [744, 480, 12, 15], [765, 480, 18, 15], [831, 462, 18, 18], [831, 486, 18, 21], [831, 513, 18, 18], [135, 1047, 24, 33], [213, 1047, 24, 33]],
    round: [],
    gray: [[210, 309, 51, 21], [480, 309, 66, 21], [645, 309, 39, 24], [759, 309, 57, 24], [141, 402, 15, 45], [165, 402, 15, 45], [144, 474, 12, 45], [165, 474, 12, 45], [141, 546, 15, 45], [165, 546, 12, 45], [228, 672, 69, 24], [498, 672, 69, 24], [711, 672, 51, 24], [789, 672, 36, 24], [855, 657, 24, 39], [630, 480, 15, 15], [657, 480, 12, 15], [405, 489, 15, 15], [432, 489, 12, 15], [360, 462, 9, 9], [210, 453, 6, 9], [174, 1047, 24, 33]],
    teal: [[309, 393, 39, 12], [309, 417, 39, 12], [309, 441, 39, 15], [309, 468, 39, 12], [309, 492, 39, 12], [309, 516, 39, 15], [309, 543, 39, 12], [309, 567, 39, 12], [204, 378, 12, 12], [210, 405, 6, 12], [210, 480, 6, 9], [210, 504, 6, 12], [207, 528, 9, 12], [210, 555, 6, 9], [204, 582, 12, 9], [417, 423, 15, 15], [474, 420, 15, 18], [531, 423, 18, 15], [417, 531, 15, 15], [474, 531, 15, 15], [531, 531, 18, 15], [639, 414, 18, 15], [696, 414, 18, 15], [756, 414, 15, 15], [639, 522, 18, 15], [699, 522, 15, 15], [756, 522, 15, 15], [456, 489, 12, 15], [495, 489, 12, 15], [678, 480, 15, 15]],
    conns: [],
    chips: [[381, 196, 36, 28, [[390, 202, 18, 15]]], [396, 229, 27, 20], [411, 937, 80, 57], [499, 965, 45, 48], [499, 1023, 45, 40]],
    bgas: [[258, 735, 48, 55, "yyttg"], [327, 859, 57, 58, "yyyyg"], [354, 1008, 47, 38, "yyyg"], [681, 735, 276, 276, "yyyyyggt"]],
    dots: [[468, 192, 75, 78]],
    parts: [[198, 780, 42, 49, "yy"], [324, 768, 50, 42, "yy"], [214, 838, 24, 42], [229, 882, 24, 45, "yy"], [257, 884, 24, 44, "yy"], [284, 884, 24, 44, "yy"], [246, 951, 50, 38, "yy"], [331, 924, 24, 43], [393, 861, 25, 43, "yy"], [420, 861, 24, 43, "yy"], [447, 861, 24, 43, "yy"], [406, 1019, 25, 47, "yg"], [436, 1023, 18, 28], [324, 828, 42, 24, "yg"], [367, 826, 18, 24, "gg"], [270, 797, 32, 39, "yy"], [492, 910, 18, 27, "gy"], [511, 910, 18, 27, "gy"]],
    solid: [[435, 939, 39, 52], [501, 1026, 24, 33], [504, 974, 21, 22]],
    pins: [[355, 220], [284, 763], [445, 802], [463, 802], [418, 959], [454, 967], [514, 988], [514, 1042], [820, 874], [825, 878]],
    goldDots: [],
    grayDots: [[855, 595, 15], [139, 1027, 6]],
    holes: [],
    marks: [[633, 786], [648, 786], [636, 801], [651, 816], [333, 972], [645, 966], [657, 981], [657, 996], [690, 1017]],
    extra: "",
  },
  {
    at: 2400,
    stroke: 8,
    traces: [
      "M522 500L530 492H688L702 507V712L690 727H528L517 715V505Z",
      "M118 145L150 140 175 125 190 100H270L290 122H310L317 130V205L307 217H222L210 202H120L112 192V150Z",
    ],
    clusters: [[112, 290, 34, 70], [112, 368, 34, 42], [173, 472, 78, 40, 1], [258, 480, 36, 40, 0.8], [142, 155, 55, 21, 1], [275, 128, 25, 60, 0.8], [228, 187, 20, 12], [265, 192, 20, 12], [565, 500, 85, 20], [558, 545, 100, 42, 0.8], [600, 520, 55, 30, 0.8], [120, 540, 14, 14], [120, 670, 38, 25, 0.8], [165, 680, 42, 15], [140, 632, 66, 30, 0.5], [250, 655, 80, 40, 0.6], [434, 737, 56, 60, 0.8], [432, 890, 22, 95, 0.8], [487, 962, 48, 20, 1], [435, 515, 20, 65], [525, 590, 13, 60], [660, 622, 12, 38], [672, 678, 20, 30, 1], [388, 632, 34, 28, 1], [303, 600, 28, 60, 0.8], [0, 1012, 110, 18], [45, 1032, 65, 12], [330, 1058, 90, 18, 1], [425, 1045, 22, 28], [705, 312, 35, 38, 0.6], [510, 925, 12, 22], [632, 950, 25, 30, 0.8], [330, 490, 30, 15], [560, 770, 20, 20], [603, 770, 30, 18, 1]],
    gold: [[519, 1053, 24, 33], [174, 510, 15, 18], [192, 510, 15, 18], [207, 510, 12, 18]],
    round: [],
    gray: [[123, 222, 21, 33], [708, 252, 21, 33], [561, 1053, 21, 33], [60, 381, 18, 27], [60, 486, 18, 27], [0, 672, 15, 24]],
    conns: [],
    chips: [[204, 126, 69, 60], [537, 589, 123, 122, [[555, 606, 84, 84]]], [565, 512, 33, 26], [160, 1042, 25, 22], [232, 1050, 22, 25], [256, 1050, 22, 25], [459, 882, 37, 58, [[465, 898, 27, 24]]]],
    bgas: [[147, 546, 75, 77, "yyyttgn"], [327, 531, 102, 93, "yyyyg"], [587, 793, 34, 46, "yyg"], [534, 915, 48, 60, "yyyn"]],
    box: [199, 730, 202, 270],
    grids: [[219, 726, 7, 4, "yyyg"], [219, 795, 7, 4, "yyyg"], [219, 852, 7, 2, "ttyg"], [219, 885, 7, 4, "yyyg"], [219, 954, 7, 4, "yyyg"], [333, 726, 4, 6, "yyyg"], [321, 795, 6, 9, "yyggt"], [333, 903, 4, 8, "yygt"]],
    parts: [[279, 523, 41, 50, "yy"], [333, 630, 50, 39, "yy"], [425, 631, 40, 52, "yy"], [333, 673, 45, 25], [378, 673, 45, 25, "gy"], [343, 504, 45, 24, "gy"], [388, 504, 45, 24, "yg"], [305, 468, 24, 43, "gy"], [453, 516, 32, 46], [449, 810, 63, 47, "yy"], [543, 792, 39, 49, "yy"], [587, 918, 40, 50, "yy"], [546, 866, 24, 43], [572, 866, 24, 43, "gg"], [504, 891, 42, 24], [516, 832, 21, 47, "yy"], [628, 795, 19, 29], [628, 824, 19, 29], [279, 573, 43, 27], [235, 560, 18, 28], [235, 595, 18, 34], [118, 556, 18, 30], [297, 1018, 52, 19], [349, 1018, 52, 19], [628, 877, 19, 31], [461, 585, 27, 43, "gy"], [579, 843, 30, 20], [598, 882, 20, 30], [510, 755, 30, 21, "yg"]],
    pins: [[238, 157], [301, 547], [379, 580], [283, 709], [481, 832], [562, 817], [607, 817], [637, 808], [526, 856], [478, 910], [559, 946], [607, 943], [472, 964], [10, 874], [15, 878]],
    goldDots: [],
    grayDots: [[46, 595, 15], [528, 156, 5]],
    holes: [],
    marks: [[693, 294], [693, 318], [693, 327], [729, 297], [729, 354], [729, 363], [87, 576], [87, 585], [204, 111], [219, 111], [231, 111], [243, 111], [258, 465], [270, 465], [171, 633], [183, 633], [111, 645], [123, 654], [120, 666], [189, 177], [429, 1002]],
    extra: `<circle cx="355" cy="166" r="7" fill="#fff" stroke="${COLORS.t}" stroke-width="3"/>
      <path d="M295 50H392V92H295Z" fill="${COLORS.n}" stroke="${COLORS.w}" stroke-width="3"/>
      <path d="M294 52h21v11h-21zM295 78h20v9h-20zM318 78h21v9h-21zM345 78h18v9h-18zM369 78h21v9h-21z" fill="${COLORS.y}"/>
      <path d="M321 52h18v11h-18z" fill="${COLORS.g}"/>
      <path d="M345 52h18v11h-18zM369 52h21v11h-21z" fill="${COLORS.t}"/>`,
  },
];

const circles = (list, color, r) =>
  list
    .map((c) => `<circle cx="${c[0]}" cy="${c[1]}" r="${c[2] || r}" fill="${color}"/>`)
    .join("");

function drawSection(s) {
  const small = new Layer();
  s.clusters.forEach((c) => small.cluster(...c));
  (s.wides || []).forEach((c) => small.wide(...c));

  const large = new Layer();
  s.gold.forEach((r) => large.rect("y", ...r));
  s.gray.forEach((r) => large.rect("g", ...r));
  (s.teal || []).forEach((r) => large.rect("t", ...r));
  s.conns.forEach((c) => large.conn(...c));
  s.chips.forEach((c) => large.chip(...c));
  s.parts.forEach((p) => large.part(...p));
  (s.bgas || []).forEach((b) => large.bga(...b));
  (s.grids || []).forEach((g) => large.grid(...g));
  (s.solid || []).forEach((r) => large.rect("y", ...r));
  (s.dots || []).forEach(([x, y, w, h]) => {
    large.frame(x, y, w, h);
    for (let j = y + 6; j < y + h - 3; j += 9) {
      for (let i = x + 6; i < x + w - 3; i += 12) {
        large.rect(pick("yytg"), i, j, 3, 3);
        large.rect(pick("yg"), i + 6, j, 3, 3);
      }
    }
  });
  s.marks.forEach(([x, y]) => {
    large.rect("y", x, y + 3, 9, 3);
    large.rect("y", x + 3, y, 3, 9);
  });

  let out = `<g transform="translate(${s.at} 0)">`;
  if (s.box) {
    const [x, y, w, h] = s.box;
    out += `<rect x="${x}" y="${y}" width="${w}" height="${h}" fill="none" stroke="${COLORS.w}" stroke-width="3"/>`;
  }
  out += s.traces
    .map((d) => `<path d="${d}" fill="none" stroke="${COLORS.w}" stroke-width="${s.stroke}"/>`)
    .join("");
  out += small.svg() + large.svg();
  out += s.round
    .map((r) => `<rect x="${r[0]}" y="${r[1]}" width="${r[2]}" height="${r[3]}" rx="8" fill="${COLORS.y}"/>`)
    .join("");
  out += circles(s.goldDots, COLORS.y, 12) + circles(s.grayDots, COLORS.g, 12);
  out += s.holes
    .map(([x, y, c]) => `<circle cx="${x}" cy="${y}" r="15" fill="#fff" stroke="${COLORS[c || "g"]}" stroke-width="6"/>`)
    .join("");
  out += s.extra;
  out += circles(s.pins, COLORS.b, 7);
  return out + "</g>";
}

let markup = outlines
  .map((d) => `<path d="${d}" fill="${COLORS.n}" stroke="#3f8a63" stroke-width="2" fill-rule="evenodd"/>`)
  .join("");
markup += sections.map(drawSection).join("");
[[789, -126], [2139, -126], [789, 1074], [2139, 1074]].forEach(([x, y]) => {
  markup += `<text class="watermark" transform="translate(${x + 14} ${y + 14}) rotate(-45)">XZZ@XZZHK</text>`;
});
document.getElementById("board").innerHTML = markup;
```
